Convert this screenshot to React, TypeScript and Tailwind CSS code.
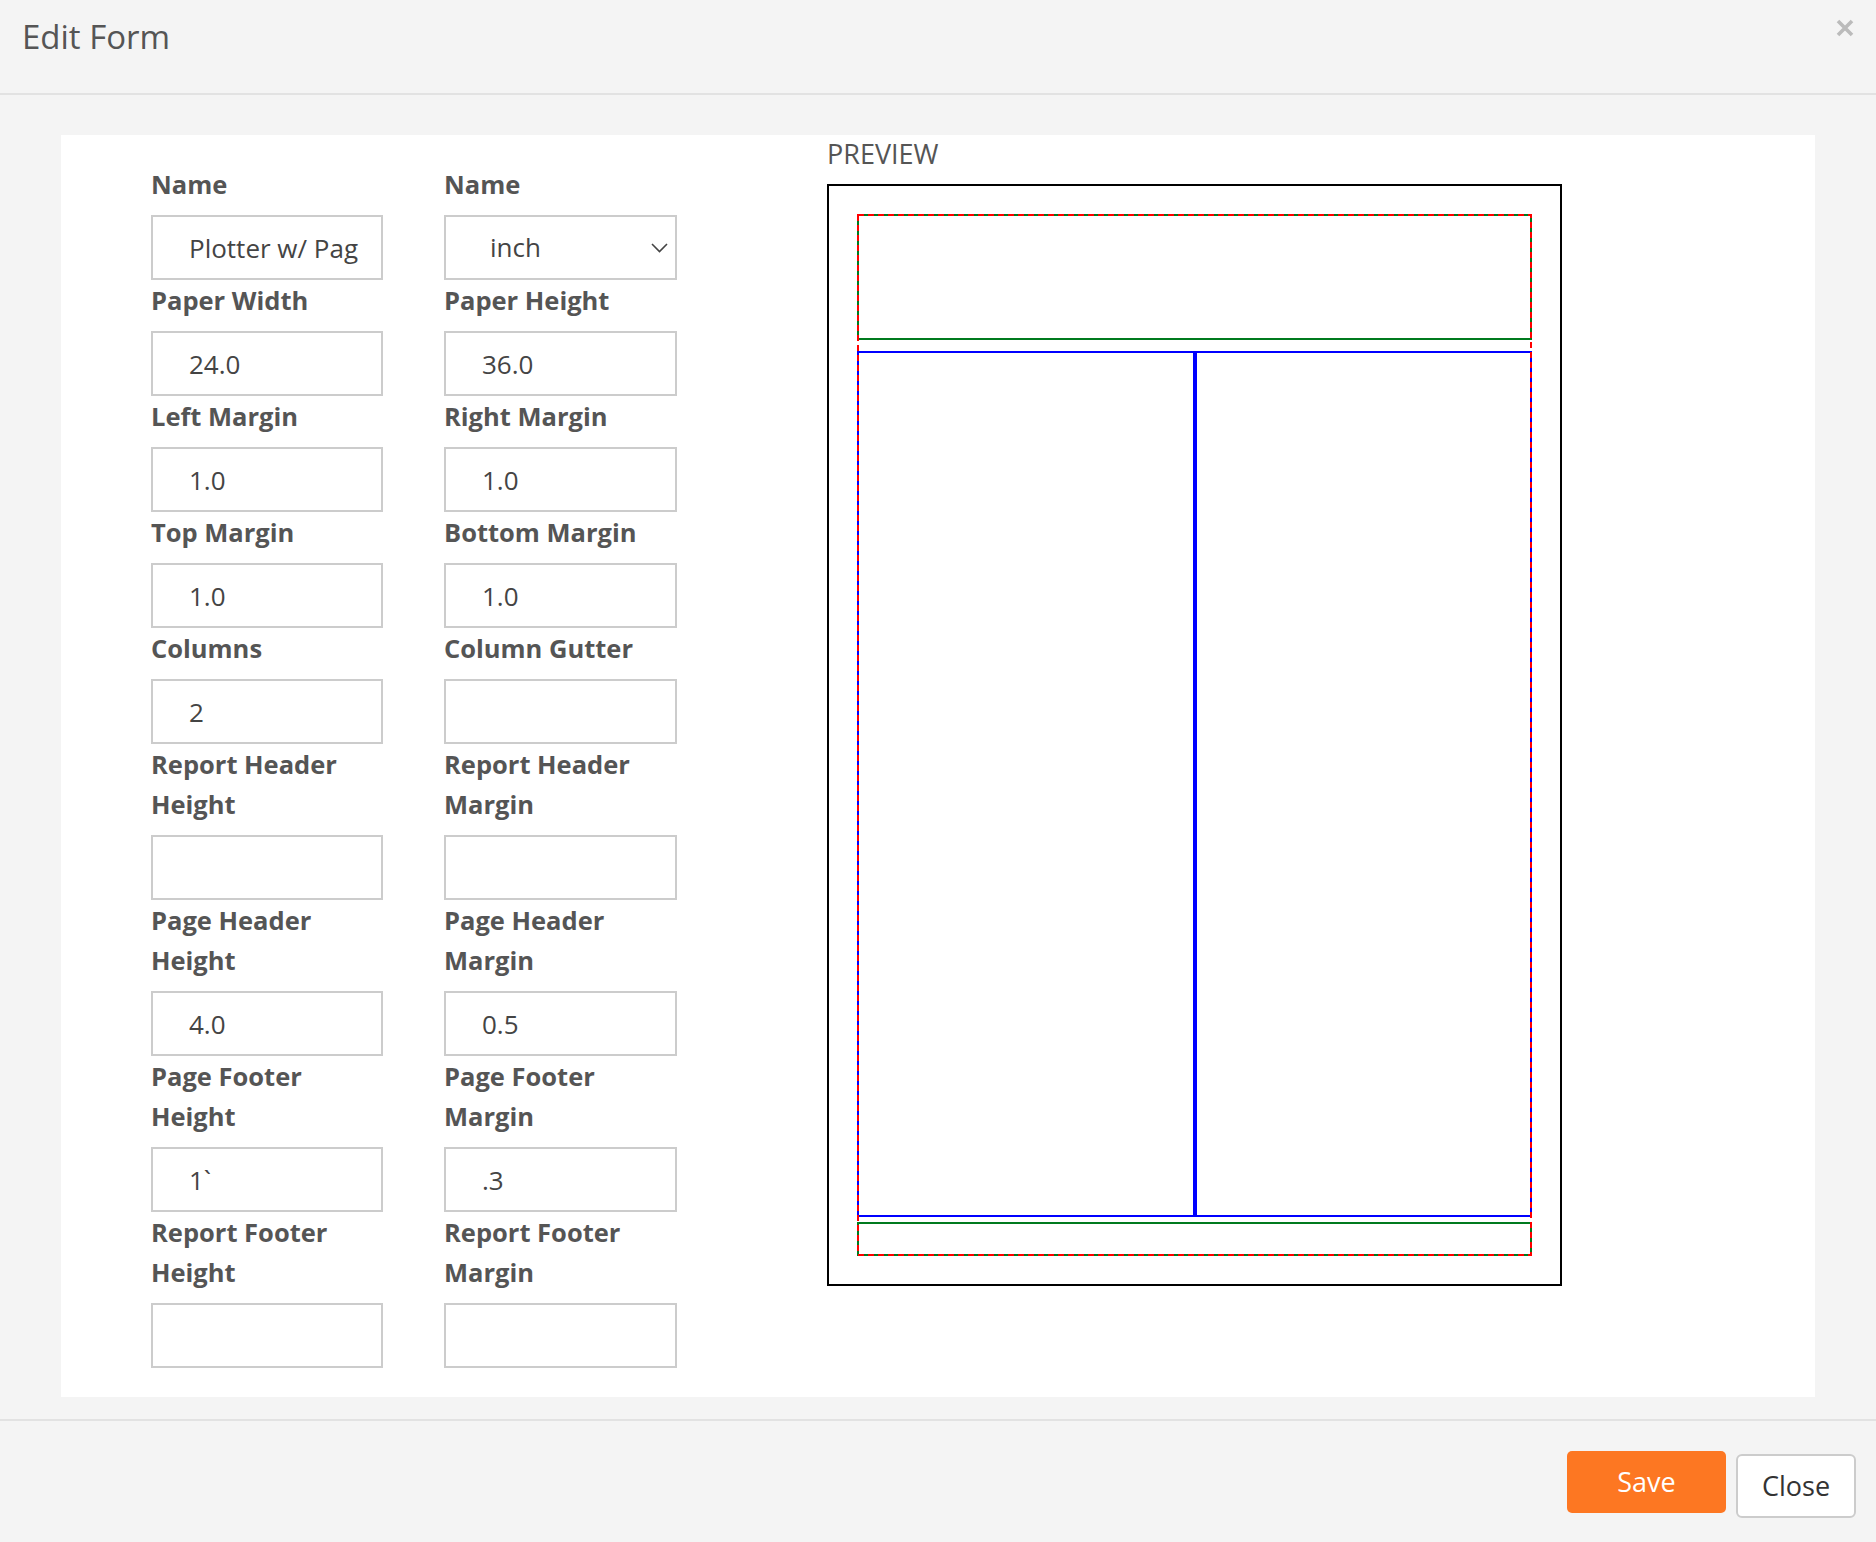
import React from "react";

type Field = { label: string; value?: string; select?: boolean };

const ROWS: [Field, Field][] = [
  [{ label: "Name", value: "Plotter w/ Pag" }, { label: "Name", value: "inch", select: true }],
  [{ label: "Paper Width", value: "24.0" }, { label: "Paper Height", value: "36.0" }],
  [{ label: "Left Margin", value: "1.0" }, { label: "Right Margin", value: "1.0" }],
  [{ label: "Top Margin", value: "1.0" }, { label: "Bottom Margin", value: "1.0" }],
  [{ label: "Columns", value: "2" }, { label: "Column Gutter", value: "" }],
  [{ label: "Report Header Height", value: "" }, { label: "Report Header Margin", value: "" }],
  [{ label: "Page Header Height", value: "4.0" }, { label: "Page Header Margin", value: "0.5" }],
  [{ label: "Page Footer Height", value: "1`" }, { label: "Page Footer Margin", value: ".3" }],
  [{ label: "Report Footer Height", value: "" }, { label: "Report Footer Margin", value: "" }],
];

function FormField({ field }: { field: Field }) {
  return (
    <div className="flex flex-col">
      <label className="text-[25.5px] leading-[40px] font-bold text-[#555] mb-[11px]">{field.label}</label>
      {field.select ? (
        <div className="h-[65px] border-2 border-[#cccccc] bg-white flex items-center justify-between pl-[44px] pr-[7px] text-[26px] text-[#444]">
          <span>{field.value}</span>
          <svg width="17" height="10" viewBox="0 0 17 10" fill="none">
            <path d="M1 1l7.5 7.5L16 1" stroke="#444" strokeWidth="1.6" />
          </svg>
        </div>
      ) : (
        <input
          readOnly
          value={field.value}
          className="h-[65px] w-full border-2 border-[#cccccc] bg-white pl-[36px] text-[26px] text-[#444] outline-none"
        />
      )}
    </div>
  );
}

// page preview, 24 x 36 in paper scaled to the outer box
function Preview() {
  const OW = 735;
  const OH = 1102;
  const s = OW / 24;
  const b = 2;
  const W = OW - 2 * b;
  const H = OH - 2 * b;
  const px = (v: number) => Math.round(v - b);
  const L = px(s);
  const R = px(OW - s);
  const T = px(s);
  const B = px(OH - s);
  const headBottom = px(s + 4 * s) + 2;
  const bodyTop = px(s + 4.5 * s);
  const footTop = px(OH - 2 * s) - 2;
  const bodyBottom = px(OH - 2.3 * s);
  const mid = Math.round((L + R) / 2);
  return (
    <div className="w-[735px] h-[1102px] border-2 border-black bg-white">
      <svg width={W} height={H} viewBox={`0 0 ${W} ${H}`} shapeRendering="crispEdges">
        <rect x={L} y={T} width={R - L} height={headBottom - T} fill="none" stroke="#007a1e" strokeWidth="2" />
        <rect x={L} y={bodyTop} width={R - L} height={bodyBottom - bodyTop} fill="none" stroke="#0000ff" strokeWidth="2" />
        <line x1={mid} y1={bodyTop} x2={mid} y2={bodyBottom} stroke="#0000ff" strokeWidth="4" />
        <rect x={L} y={footTop} width={R - L} height={B - footTop} fill="none" stroke="#007a1e" strokeWidth="2" />
        <rect x={L} y={T} width={R - L} height={B - T} fill="none" stroke="#ff0000" strokeWidth="2" strokeDasharray="6 4" />
      </svg>
    </div>
  );
}

export default function App() {
  return (
    <div
      className="w-[1876px] h-[1542px] bg-[#f4f4f4] flex flex-col text-[#555]"
      style={{ fontFamily: '"Open Sans", "Liberation Sans", sans-serif' }}
    >
      <div className="h-[95px] border-b-2 border-[#e2e2e2] flex items-start justify-between px-[22px]">
        <h1 className="pt-[17px] text-[33px] leading-[40px] text-[#555]">Edit Form</h1>
        <button className="mt-[19px] text-[#bbb]">
          <svg width="18" height="18" viewBox="0 0 18 18">
            <path d="M2 2l14 14M16 2L2 16" stroke="currentColor" strokeWidth="3.6" />
          </svg>
        </button>
      </div>

      <div className="pt-[40px] px-[61px] pb-[22px] border-b-2 border-[#e2e2e2]">
        <div className="bg-white flex items-start pl-[90px] pb-[29px]">
          <div className="pt-[29px] grid grid-cols-[232px_233px] gap-x-[61px]">
            {ROWS.map((row, i) => (
              <React.Fragment key={i}>
                <FormField field={row[0]} />
                <FormField field={row[1]} />
              </React.Fragment>
            ))}
          </div>
          <div className="ml-[150px] pt-[4px] flex flex-col">
            <div className="text-[27px] leading-[30px] text-[#555] mb-[15px]">PREVIEW</div>
            <Preview />
          </div>
        </div>
      </div>

      <div className="flex justify-end items-start pt-[30px] pr-[20px] gap-[10px]">
        <button className="w-[159px] h-[62px] bg-[#fd7722] rounded-[5px] text-white text-[27px]">Save</button>
        <button className="mt-[3px] w-[120px] h-[64px] bg-white border-2 border-[#cccccc] rounded-[6px] text-[#333] text-[27px]">
          Close
        </button>
      </div>
    </div>
  );
}
